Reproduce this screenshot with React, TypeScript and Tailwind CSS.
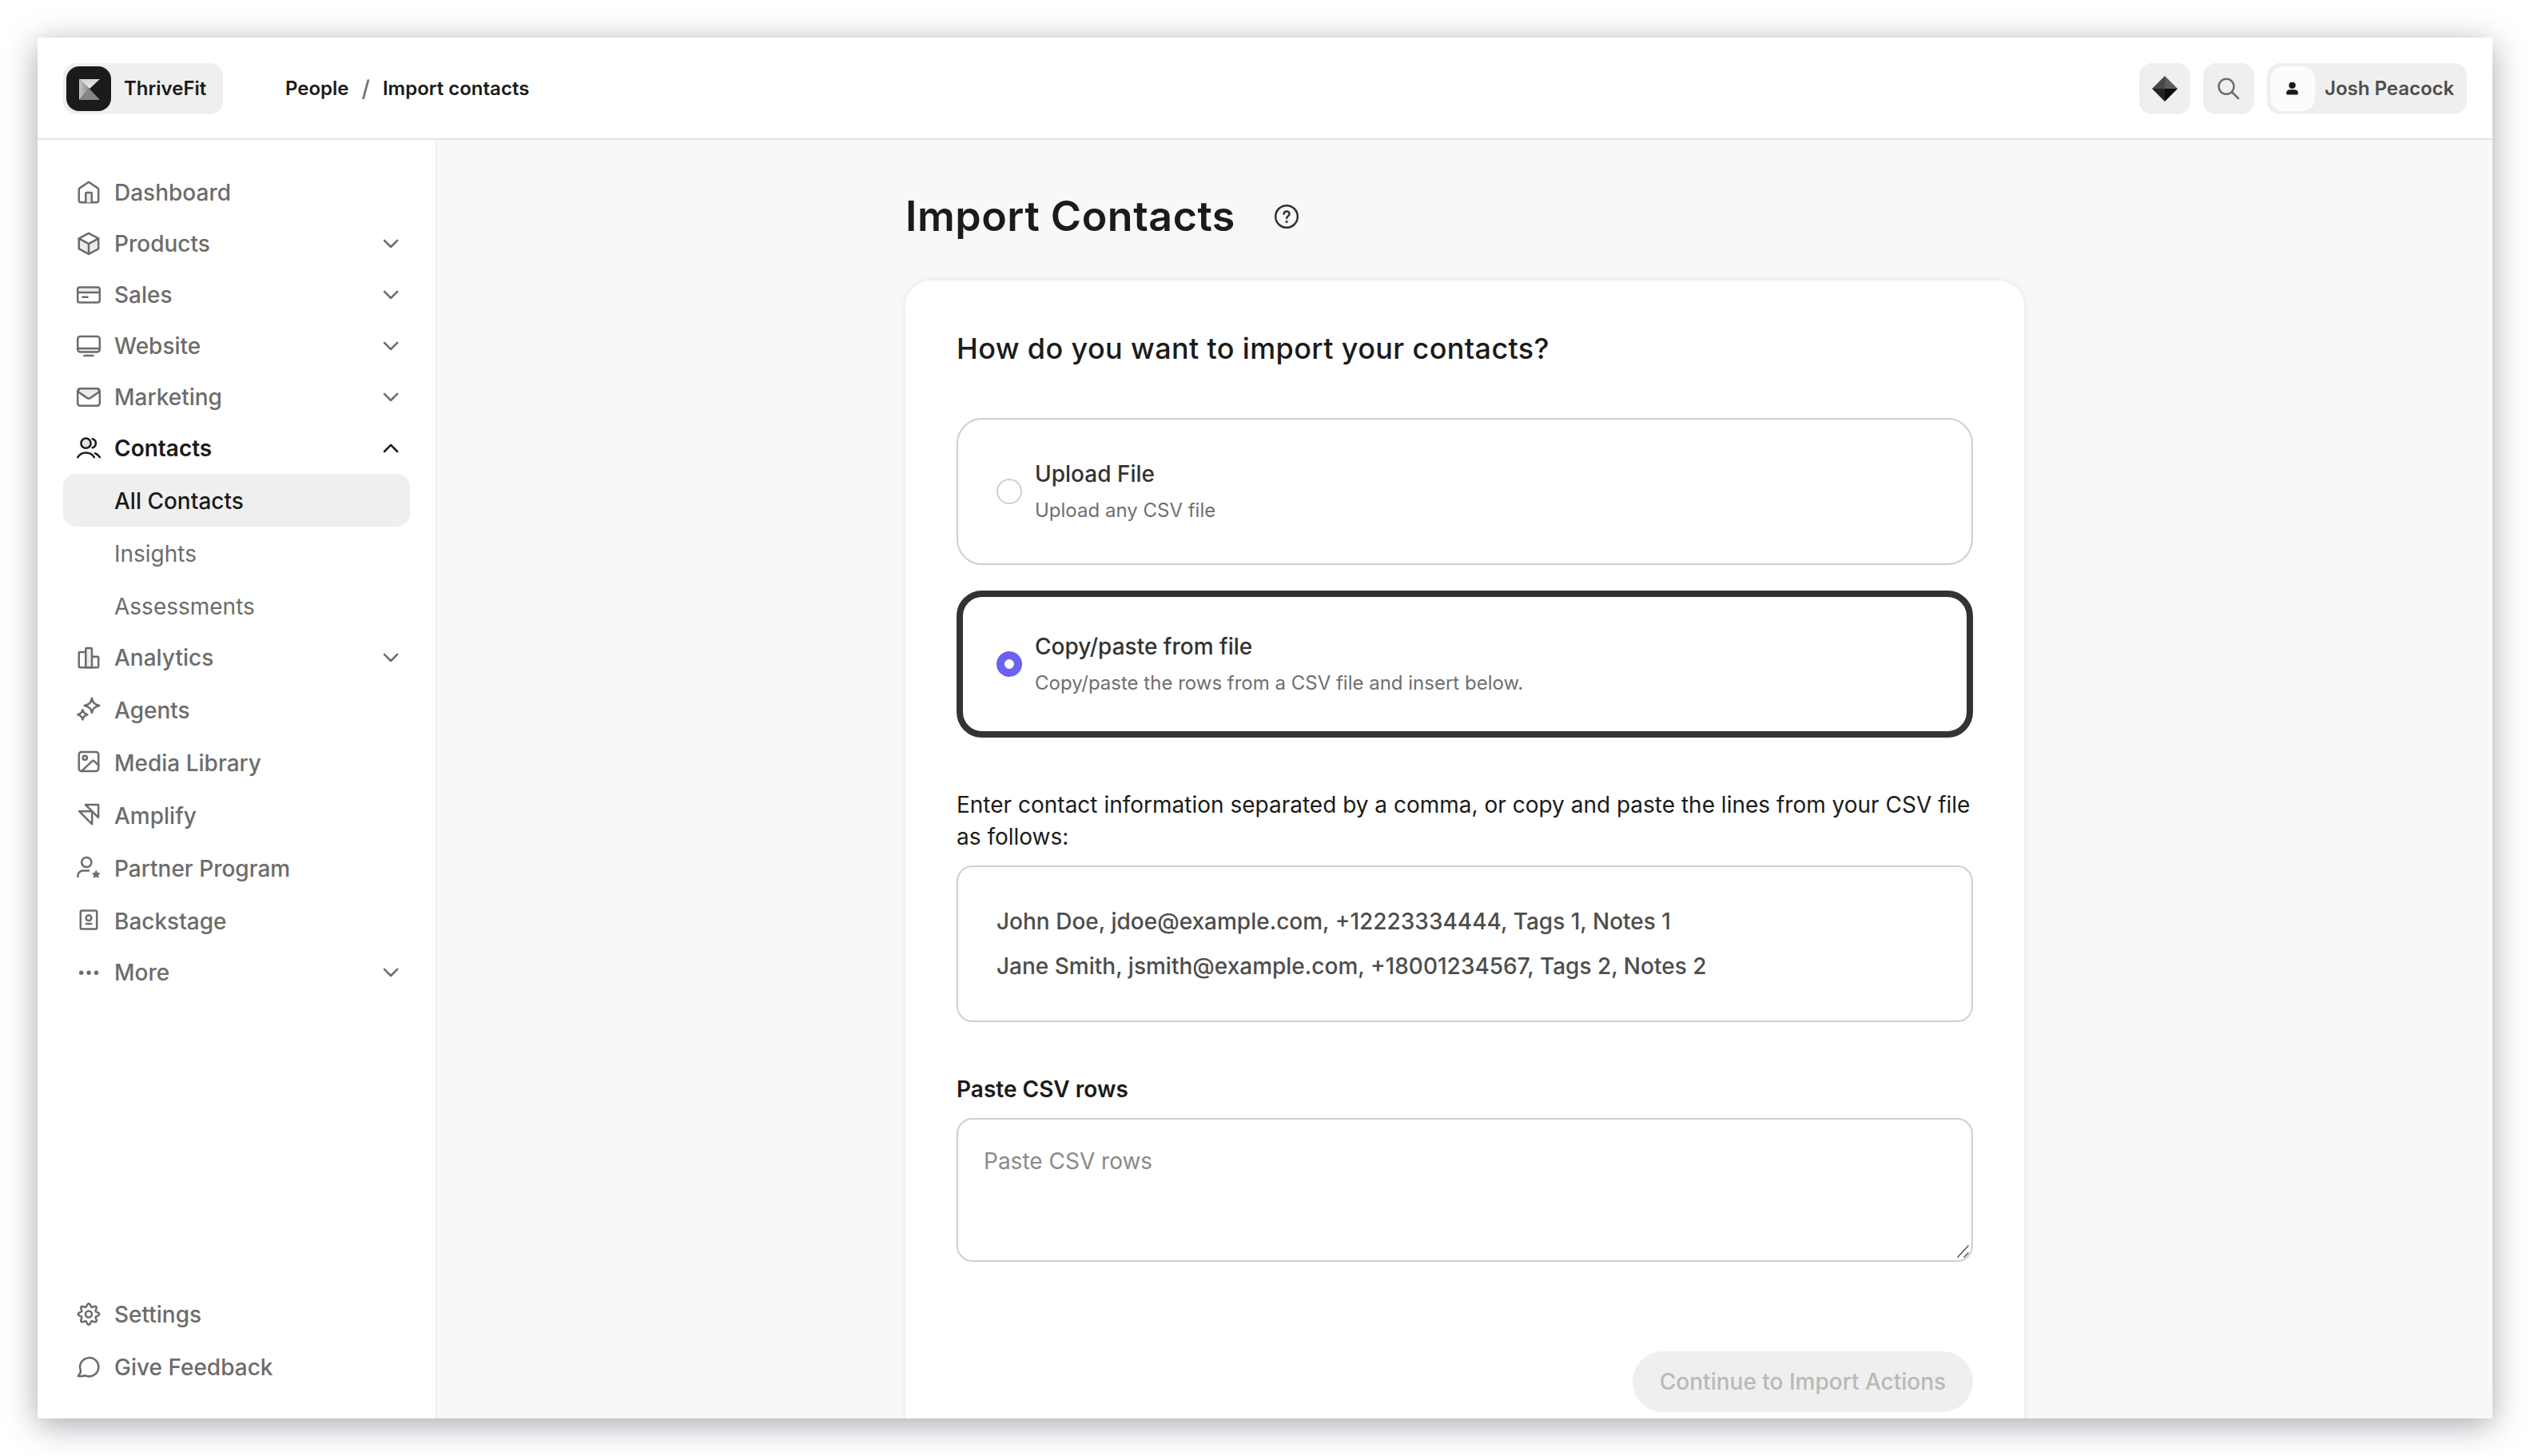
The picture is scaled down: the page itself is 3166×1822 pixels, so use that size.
import type { ReactNode } from 'react'

const STROKE = {
  fill: 'none',
  stroke: 'currentColor',
  strokeWidth: 2.5,
  strokeLinecap: 'round' as const,
  strokeLinejoin: 'round' as const,
}

// Eight rounded teeth around the centre of a 32px box
const GEAR = Array.from({ length: 97 }, (_, i) => {
  const a = (i / 96) * Math.PI * 2
  const r = 11.3 + 1.9 * Math.cos(8 * a)
  return `${i ? 'L' : 'M'}${(16 + r * Math.sin(a)).toFixed(2)} ${(16.500 - r * Math.cos(a)).toFixed(2)}`
}).join('')

function Icon({ children }: { children: ReactNode }) {
  return (
    <svg className="h-8 w-8 flex-shrink-0" viewBox="0 0 32 32" {...STROKE}>
      {children}
    </svg>
  )
}

const icons: Record<string, ReactNode> = {
  dashboard: (
    <Icon>
      <path d="M3.8 13.2c0-.8.3-1.4.9-1.8L16 3.8l11.3 7.6c.6.4.9 1 .9 1.800v13.600c0 1.400-.9 2.400-2.400 2.400H6.200c-1.500 0-2.400-1-2.400-2.400z" />
      <path d="M12.300 29.200V18c0-.6.400-1 1-1h5.500c.6 0 1 .4 1 1v11.200" fill="#ececec" />
    </Icon>
  ),
  products: (
    <Icon>
      <path d="M3.800 9.400 16 16l12.200-6.600v13L16 28.800 3.800 22.400z" fill="#ececec" />
      <path d="M16 2.800l12.200 6.600L16 16 3.800 9.400z" fill="#fff" />
      <path d="M16 16v13" />
    </Icon>
  ),
  sales: (
    <Icon>
      <path d="M2.500 7h27v6h-27z" fill="#ececec" stroke="none" />
      <rect x="2.200" y="6.500" width="27.600" height="19" rx="2.600" />
      <path d="M2.200 13h27.600M8.500 18.700h6" />
    </Icon>
  ),
  website: (
    <Icon>
      <path d="M2.500 19.500h27v3l-2 1.200h-23l-2-1.200z" fill="#ececec" stroke="none" />
      <rect x="2.200" y="3.900" width="27.600" height="19.700" rx="3.600" />
      <path d="M2.200 19h27.600M10.500 28h11" />
    </Icon>
  ),
  marketing: (
    <Icon>
      <rect x="2.200" y="5.200" width="27.600" height="21.600" rx="3.400" />
      <path
        d="M2.700 9.200l11.500 7.900c1.100.7 2.500.7 3.600 0l11.500-7.900C29 6.800 28 5.200 26 5.200H6C4 5.200 3 6.800 2.700 9.200z"
        fill="#ececec"
      />
    </Icon>
  ),
  contacts: (
    <Icon>
      <circle cx="12.500" cy="9.700" r="6.100" fill="#e2e2e2" />
      <path d="M20.700 4.200c2.600.8 4.200 2.900 4.200 5.500s-1.600 4.700-4.200 5.500" />
      <path d="M2.300 27.100c2.400-3.700 6-5.600 10.200-5.600s8 1.900 10.400 5.600M24 22.200c2.500.9 4.400 2.500 5.900 4.900" />
    </Icon>
  ),
  analytics: (
    <Icon>
      <path d="M12.300 9H4.800c-.6 0-1 .4-1 1v17.200c0 .6.400 1 1 1h22.400c.6 0 1-.4 1-1V15.700c0-.6-.4-1-1-1H20" />
      <path d="M12.300 28.200V5c0-.6.400-1 1-1h5.700c.6 0 1 .4 1 1v23.200z" fill="#ececec" />
    </Icon>
  ),
  agents: (
    <Icon>
      <path d="M20 1.700c1 5.500 3.100 7.900 9.300 9.300-6.200 1.400-8.300 3.800-9.300 9.100-1-5.300-3.100-7.700-9.300-9.100C16.900 9.600 19 7.200 20 1.700z" />
      <path d="M8.400 16.300c.8 3.600 2.200 5.100 6 6-3.800.9-5.200 2.400-6 6.100-.8-3.700-2.200-5.200-6-6.100 3.800-.9 5.200-2.400 6-6z" />
    </Icon>
  ),
  media: (
    <Icon>
      <rect x="3.800" y="2.900" width="24.400" height="24" rx="3" />
      <circle cx="11.300" cy="10.300" r="2.600" />
      <path d="M7.400 26.600l13-12.200c.7-.6 1.700-.6 2.400 0l5.400 5.300" />
    </Icon>
  ),
  amplify: (
    <Icon>
      <path d="M12 3h16.100v16z" />
      <path d="M4.100 11.200h16.100v16.100z" />
    </Icon>
  ),
  partner: (
    <Icon>
      <circle cx="13.300" cy="9" r="6.100" />
      <path d="M2.400 27v-.7c0-3.800 2.900-6.800 6.700-6.800h7" />
      <path
        d="M25.300 19.600l1.400 2.900 3.200.4-2.300 2.200.6 3.200-2.900-1.500-2.900 1.500.6-3.200-2.300-2.200 3.200-.4z"
        fill="currentColor"
        strokeWidth={1}
      />
    </Icon>
  ),
  backstage: (
    <Icon>
      <rect x="5.800" y="3.400" width="20.400" height="23.200" rx="1.600" />
      <circle cx="16" cy="12.700" r="3.400" />
      <path d="M12.900 20h6.400" />
    </Icon>
  ),
  more: (
    <svg className="h-8 w-8 flex-shrink-0" viewBox="0 0 32 32" fill="currentColor">
      <circle cx="6.700" cy="16.300" r="2.700" />
      <circle cx="16.100" cy="16.300" r="2.700" />
      <circle cx="25.500" cy="16.300" r="2.700" />
    </svg>
  ),
  settings: (
    <Icon>
      <circle cx="16" cy="16.500" r="4" />
      <path d={GEAR} />
    </Icon>
  ),
  feedback: (
    <Icon>
      <path d="M5.900 20.900A11.600 11.600 0 1 1 12 27.300C9 28.200 5.500 28.300 2.900 27.900 4.800 26 6.300 24 5.900 20.900z" />
    </Icon>
  ),
}

function Chevron({ up }: { up?: boolean }) {
  return (
    <svg className="ml-auto h-8 w-8" viewBox="0 0 32 32" {...STROKE}>
      <path d={up ? 'M8 20l8.100-8.200 8.100 8.200' : 'M8 11.800l8.100 8.200 8.100-8.200'} />
    </svg>
  )
}

function NavItem({ icon, label, expandable }: { icon: string; label: string; expandable?: boolean }) {
  return (
    <a className={`flex items-center gap-4 pr-2 pl-4 ${expandable ? 'h-16' : 'h-[66px]'}`}>
      {icons[icon]}
      <span className={expandable ? '' : 'pt-0.5'}>{label}</span>
      {expandable && <Chevron />}
    </a>
  )
}

function Option({ title, text, selected }: { title: string; text: string; selected?: boolean }) {
  return (
    <label
      className={`flex h-[184px] items-center gap-4 rounded-[32px] ${
        selected ? 'border-8 border-[#333331] px-[42px]' : 'border-2 border-[#cfcfcf] px-12'
      }`}
    >
      <span
        className={`h-8 w-8 flex-shrink-0 rounded-full bg-white ${
          selected ? 'border-[10px] border-[#6b62f2]' : 'border-2 border-[#cfcfcf]'
        }`}
      />
      <span className="flex flex-col gap-2">
        <span className="text-[28px] leading-10 font-medium text-[#333331]">{title}</span>
        <span className="text-2xl leading-9 text-[#6f6f6d]">{text}</span>
      </span>
    </label>
  )
}

function Header() {
  return (
    <header className="flex h-32 flex-shrink-0 items-center border-b-2 border-[#e4e4e4] px-8 pt-0.5 text-2xl font-semibold text-[#1b1b19]">
      <div className="flex h-16 w-[200px] items-center gap-4 rounded-2xl bg-[#efefef] p-1">
        <div className="flex h-14 w-14 items-center justify-center rounded-2xl bg-[#1b1b19]">
          <svg className="h-7 w-7" viewBox="-2 -2 28 28">
            <defs>
              <linearGradient id="logo-left" x1="0" x2="1">
                <stop offset="0" stopColor="#c4c4c2" />
                <stop offset="1" stopColor="#8f8f8d" />
              </linearGradient>
              <linearGradient id="logo-top" x1="0" y1="0" x2="0" y2="1">
                <stop offset="0" stopColor="#d2d0d0" />
                <stop offset="1" stopColor="#f0eeee" />
              </linearGradient>
            </defs>
            <path d="M0 0h26L13 12z" fill="url(#logo-top)" />
            <path d="M0 0v26l13-14z" fill="url(#logo-left)" />
            <path d="M0 26h26L13 12z" fill="#858583" />
          </svg>
        </div>
        ThriveFit
      </div>
      <nav className="ml-[78px] flex items-center gap-4">
        <span>People</span>
        <span className="text-[28px] leading-8 font-medium text-[#6f6f6d]">/</span>
        <span>Import contacts</span>
      </nav>
      <div className="ml-auto flex gap-4">
        <button className="flex h-16 w-16 items-center justify-center rounded-2xl bg-[#efefef]">
          <svg className="h-8 w-8" viewBox="0 0 32 32">
            <path d="M16 0v16H0z" fill="#484848" />
            <path d="M16 0l16 16H16z" fill="#5c5c5c" />
            <path d="M0 16h16v16z" fill="#222" />
            <path d="M16 16h16L16 32z" fill="#0c0c0c" />
          </svg>
        </button>
        <button className="flex h-16 w-16 items-center justify-center rounded-2xl bg-[#efefef] text-[#6f6f6d]">
          <Icon>
            <circle cx="13" cy="13.300" r="9.500" />
            <path d="M20.300 20.500l7.600 7.500" />
          </Icon>
        </button>
        <div className="flex h-16 w-[250px] items-center gap-3 rounded-2xl bg-[#efefef] p-1 text-[#4d4d4b]">
          <div className="flex h-14 w-14 items-center justify-center rounded-2xl bg-[#fcfcfc]">
            <svg className="h-4 w-4" viewBox="0 0 16 16" fill="#1b1b19">
              <circle cx="7.500" cy="3.800" r="4.300" />
              <path d="M0 14v-.5A4.200 4.200 0 0 1 4.200 9.300h6.500a4.200 4.200 0 0 1 4.200 4.200v.5a1.400 1.400 0 0 1-1.400 1.400H1.400A1.400 1.400 0 0 1 0 14z" />
            </svg>
          </div>
          Josh Peacock
        </div>
      </div>
    </header>
  )
}

function Sidebar() {
  return (
    <aside className="flex w-[500px] flex-shrink-0 flex-col border-r-2 border-[#f0f0f0] p-8 text-[28px] font-medium text-[#6c6c6a]">
      <NavItem icon="dashboard" label="Dashboard" />
      <NavItem icon="products" label="Products" expandable />
      <NavItem icon="sales" label="Sales" expandable />
      <NavItem icon="website" label="Website" expandable />
      <NavItem icon="marketing" label="Marketing" expandable />
      <div className="flex h-16 items-center gap-4 pr-2 pl-4 font-semibold text-[#1b1b19]">
        {icons.contacts}
        Contacts
        <Chevron up />
      </div>
      <a className="flex h-[66px] items-center rounded-2xl bg-[#efefef] pt-0.5 pl-16 text-[#1b1b19]">All Contacts</a>
      <a className="flex h-[66px] items-center pt-0.5 pl-16 font-normal">Insights</a>
      <a className="flex h-[66px] items-center pt-0.5 pl-16 font-normal">Assessments</a>
      <NavItem icon="analytics" label="Analytics" expandable />
      <NavItem icon="agents" label="Agents" />
      <NavItem icon="media" label="Media Library" />
      <NavItem icon="amplify" label="Amplify" />
      <NavItem icon="partner" label="Partner Program" />
      <NavItem icon="backstage" label="Backstage" />
      <NavItem icon="more" label="More" expandable />
      <div className="mt-auto">
        <NavItem icon="settings" label="Settings" />
        <NavItem icon="feedback" label="Give Feedback" />
      </div>
    </aside>
  )
}

export default function App() {
  return (
    <div className="h-[1822px] w-[3166px] overflow-hidden bg-white p-[47px] font-['Inter',sans-serif]">
      <div className="flex h-[1728px] w-[3072px] flex-col rounded-[3px] bg-white shadow-[0_8px_40px_rgba(0,5,25,0.35)]">
        <Header />
        <div className="flex min-h-0 flex-1">
          <Sidebar />
          <main className="flex-1 overflow-hidden bg-[#f8f8f8]">
            <div className="mx-auto w-[1400px] pt-14">
              <div className="flex h-20 items-center gap-12 text-[#1b1b19]">
                <h1 className="text-[52px] leading-20 font-semibold tracking-[0.5px]">Import Contacts</h1>
                <svg className="h-8 w-8 text-[#333331]" viewBox="0 0 32 32" {...STROKE}>
                  <circle cx="16" cy="16" r="13.800" />
                  <path d="M12.600 12.800c.2-2 1.600-3.300 3.500-3.300 2 0 3.500 1.400 3.500 3.200 0 2.800-3.500 2.800-3.500 5.300" />
                  <circle cx="16.100" cy="22.400" r="0.500" fill="currentColor" />
                </svg>
              </div>

              {/* Import card, runs past the bottom of the window */}
              <section className="mt-10 h-[1500px] rounded-[32px] bg-white px-16 pt-16 shadow-[0_0_8px_rgba(0,0,0,0.08)]">
                <h2 className="text-4xl leading-[42px] font-medium tracking-[0.36px] text-[#1b1b19]">
                  How do you want to import your contacts?
                </h2>
                <div className="mt-[66px] flex flex-col gap-8">
                  <Option title="Upload File" text="Upload any CSV file" />
                  <Option
                    title="Copy/paste from file"
                    text="Copy/paste the rows from a CSV file and insert below."
                    selected
                  />
                </div>

                <p className="mt-16 text-[28px] leading-10 text-[#1b1b19]">
                  Enter contact information separated by a comma, or copy and paste the lines from your CSV file as
                  follows:
                </p>
                <div className="mt-4 flex h-[196px] flex-col justify-center rounded-[20px] border-2 border-[#cfcfcf] px-12 text-[28px] leading-14 font-medium text-[#4d4d4b]">
                  <p>John Doe, jdoe@example.com, +12223334444, Tags 1, Notes 1</p>
                  <p>Jane Smith, jsmith@example.com, +18001234567, Tags 2, Notes 2</p>
                </div>

                <h3 className="mt-16 text-[28px] leading-10 font-semibold text-[#1b1b19]">Paste CSV rows</h3>
                <div className="mt-4 flex h-[180px] justify-between rounded-[20px] border-2 border-[#cfcfcf] pt-8 pr-0.5 pb-0.5 pl-8 text-[28px] leading-10 text-[#8a8a88]">
                  Paste CSV rows
                  <svg className="h-[18px] w-[18px] self-end text-[#555]" viewBox="0 0 18 18" {...STROKE} strokeWidth={1.6}>
                    <path d="M3 16L16 2M11 16l5-5" />
                  </svg>
                </div>

                <div className="mt-28 flex justify-end">
                  <button className="h-[76px] w-[426px] rounded-full bg-[#efefef] text-[28px] font-medium text-[#b9b9b7]">
                    Continue to Import Actions
                  </button>
                </div>
              </section>
            </div>
          </main>
        </div>
      </div>
    </div>
  )
}
